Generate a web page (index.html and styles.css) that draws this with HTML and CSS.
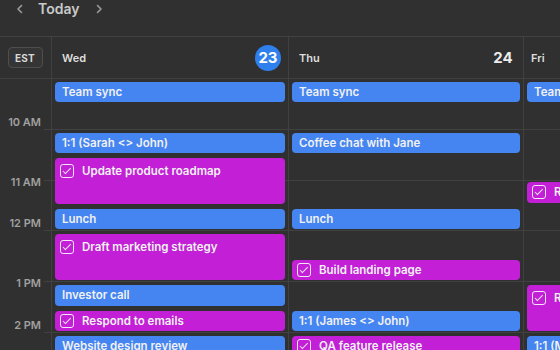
FILE: index.html
```html
<!DOCTYPE html>
<html lang="en">
<head>
  <meta charset="UTF-8">
  <title>Week view</title>
  <meta name="viewport" content="width=device-width, initial-scale=1.0">
  <link rel="stylesheet" href="styles.css">
</head>
<body>
  <div class="calendar">
    <header class="toolbar">
      <button class="nav" aria-label="Previous week">
        <svg width="8" height="10" viewBox="0 0 8 10"><path d="M5.5 1.5 2 5l3.5 3.5" /></svg>
      </button>
      <span class="today">Today</span>
      <button class="nav" aria-label="Next week">
        <svg width="8" height="10" viewBox="0 0 8 10"><path d="M2.5 1.5 6 5 2.5 8.5" /></svg>
      </button>
    </header>

    <div class="week-head">
      <div class="tz"><span class="tz-badge">EST</span></div>
      <div class="day-head">
        <span class="dow">Wed</span>
        <span class="date current">23</span>
      </div>
      <div class="day-head">
        <span class="dow">Thu</span>
        <span class="date">24</span>
      </div>
      <div class="day-head">
        <span class="dow">Fri</span>
        <span class="date">25</span>
      </div>
    </div>

    <div class="week-body">
      <div class="gutter">
        <div class="slot"><span>10 AM</span></div>
        <div class="slot"><span>11 AM</span></div>
        <div class="slot"><span>12 PM</span></div>
        <div class="slot"><span>1 PM</span></div>
        <div class="slot"><span>2 PM</span></div>
        <div class="slot"><span>3 PM</span></div>
      </div>

      <!-- rows are half hours, row 1 = 9:00 -->
      <div class="day">
        <div class="event meeting" style="grid-row: 1 / 2">Team sync</div>
        <div class="event meeting" style="grid-row: 3 / 4">1:1 (Sarah &lt;&gt; John)</div>
        <div class="event task tall" style="grid-row: 4 / 6"><span class="check"></span>Update product roadmap</div>
        <div class="event meeting" style="grid-row: 6 / 7">Lunch</div>
        <div class="event task tall" style="grid-row: 7 / 9"><span class="check"></span>Draft marketing strategy</div>
        <div class="event meeting" style="grid-row: 9 / 10">Investor call</div>
        <div class="event task" style="grid-row: 10 / 11"><span class="check"></span>Respond to emails</div>
        <div class="event meeting" style="grid-row: 11 / 12">Website design review</div>
      </div>

      <div class="day">
        <div class="event meeting" style="grid-row: 1 / 2">Team sync</div>
        <div class="event meeting" style="grid-row: 3 / 4">Coffee chat with Jane</div>
        <div class="event meeting" style="grid-row: 6 / 7">Lunch</div>
        <div class="event task" style="grid-row: 8 / 9"><span class="check"></span>Build landing page</div>
        <div class="event meeting" style="grid-row: 10 / 11">1:1 (James &lt;&gt; John)</div>
        <div class="event task" style="grid-row: 11 / 12"><span class="check"></span>QA feature release</div>
      </div>

      <div class="day">
        <div class="event meeting" style="grid-row: 1 / 2">Team sync</div>
        <div class="event task early" style="grid-row: 5 / 6"><span class="check"></span>Review pull requests</div>
        <div class="event task tall" style="grid-row: 9 / 11"><span class="check"></span>Review Q3 metrics</div>
        <div class="event meeting" style="grid-row: 11 / 12">1:1 (Mike &lt;&gt; John)</div>
      </div>
    </div>
  </div>
</body>
</html>
```

FILE: styles.css
```css
:root {
  --bg: #303030;
  --line: #414141;
  --text: #e4e4e4;
  --muted: #a0a0a0;
  --blue: #4585f2;
  --today: #2f7fec;
  --magenta: #c21fd6;
  --hour: 50.8px;
}

* {
  box-sizing: border-box;
}

html, body {
  margin: 0;
  padding: 0;
  background: var(--bg);
  overflow: hidden;
}

body {
  font-family: 'Inter', 'Liberation Sans', sans-serif;
  color: var(--text);
}

.calendar {
  width: 800px;
}

/* toolbar */
.toolbar {
  height: 37px;
  display: flex;
  align-items: flex-start;
  padding: 0 0 0 14px;
  border-bottom: 1px solid var(--line);
}

.nav {
  background: none;
  border: none;
  padding: 0;
  width: 12px;
  height: 18px;
  display: flex;
  align-items: center;
  justify-content: center;
  cursor: pointer;
}

.nav svg path {
  fill: none;
  stroke: #9a9a9a;
  stroke-width: 1.6;
  stroke-linecap: round;
  stroke-linejoin: round;
}

.today {
  font-size: 14px;
  line-height: 18px;
  font-weight: 600;
  color: #c9c9c9;
  margin: 0 14px 0 12px;
}

/* day headers */
.week-head,
.week-body {
  display: grid;
  grid-template-columns: 52px 237px 235px 237px;
}

.week-head {
  height: 42px;
  border-bottom: 1px solid var(--line);
}

.tz,
.day-head,
.gutter,
.day {
  border-right: 1px solid var(--line);
}

.tz {
  display: flex;
  align-items: center;
  justify-content: center;
  padding-right: 1px;
}

.tz-badge {
  width: 35px;
  height: 21px;
  display: flex;
  align-items: center;
  justify-content: center;
  border: 1px solid #4e4e4e;
  border-radius: 4px;
  background: #353535;
  font-size: 10px;
  font-weight: 700;
  color: #d8d8d8;
  letter-spacing: 0.2px;
}

.day-head {
  display: flex;
  align-items: center;
  justify-content: space-between;
  padding: 0 7px 0 10px;
}

.day-head:last-child {
  padding-left: 7px;
}

.dow {
  font-size: 11px;
  font-weight: 600;
  color: #dedede;
}

.date {
  width: 26px;
  height: 26px;
  display: flex;
  align-items: center;
  justify-content: center;
  font-size: 15px;
  font-weight: 700;
  color: #ececec;
}

.date.current {
  background: var(--today);
  border-radius: 50%;
  color: #fff;
}

/* time grid */
.gutter {
  display: flex;
  flex-direction: column;
}

.slot {
  position: relative;
  height: var(--hour);
  flex-shrink: 0;
  display: flex;
  align-items: flex-end;
  justify-content: flex-end;
  padding-right: 10px;
}

.slot span {
  font-size: 11px;
  line-height: 14px;
  font-weight: 600;
  color: var(--muted);
  transform: translateY(-1px);
}

.slot:nth-child(even) span {
  transform: translateY(8px);
}

.slot::after {
  content: "";
  position: absolute;
  right: 0;
  bottom: 0;
  width: 7px;
  height: 1px;
  background: var(--line);
}

.day {
  display: grid;
  grid-template-rows: repeat(12, calc(var(--hour) / 2));
  background: repeating-linear-gradient(
    to bottom,
    transparent 0,
    transparent calc(var(--hour) - 1px),
    var(--line) calc(var(--hour) - 1px),
    var(--line) var(--hour)
  );
}

.event {
  margin: 3px 3px 2px 3px;
  padding: 0 7px;
  border-radius: 4px;
  display: flex;
  align-items: center;
  gap: 8px;
  font-size: 11.5px;
  line-height: 20px;
  font-weight: 600;
  color: #f1f1f1;
  white-space: nowrap;
  overflow: hidden;
}

.event.meeting {
  background: var(--blue);
}

.event.task {
  background: var(--magenta);
  padding-left: 5px;
}

.event.tall {
  align-items: flex-start;
  padding-top: 3px;
}

.event.early {
  margin-top: 1px;
  margin-bottom: 3px;
}

.check {
  position: relative;
  flex-shrink: 0;
  width: 14px;
  height: 14px;
  margin-top: 3px;
  margin-bottom: 3px;
  border: 1.5px solid #f4e6f7;
  border-radius: 3px;
}

.event:not(.tall) .check {
  margin-top: 0;
  margin-bottom: 0;
}

.check::after {
  content: "";
  position: absolute;
  left: 3.5px;
  top: 1px;
  width: 3px;
  height: 6.5px;
  border: solid #f4e6f7;
  border-width: 0 1.5px 1.5px 0;
  transform: rotate(45deg);
}
```
